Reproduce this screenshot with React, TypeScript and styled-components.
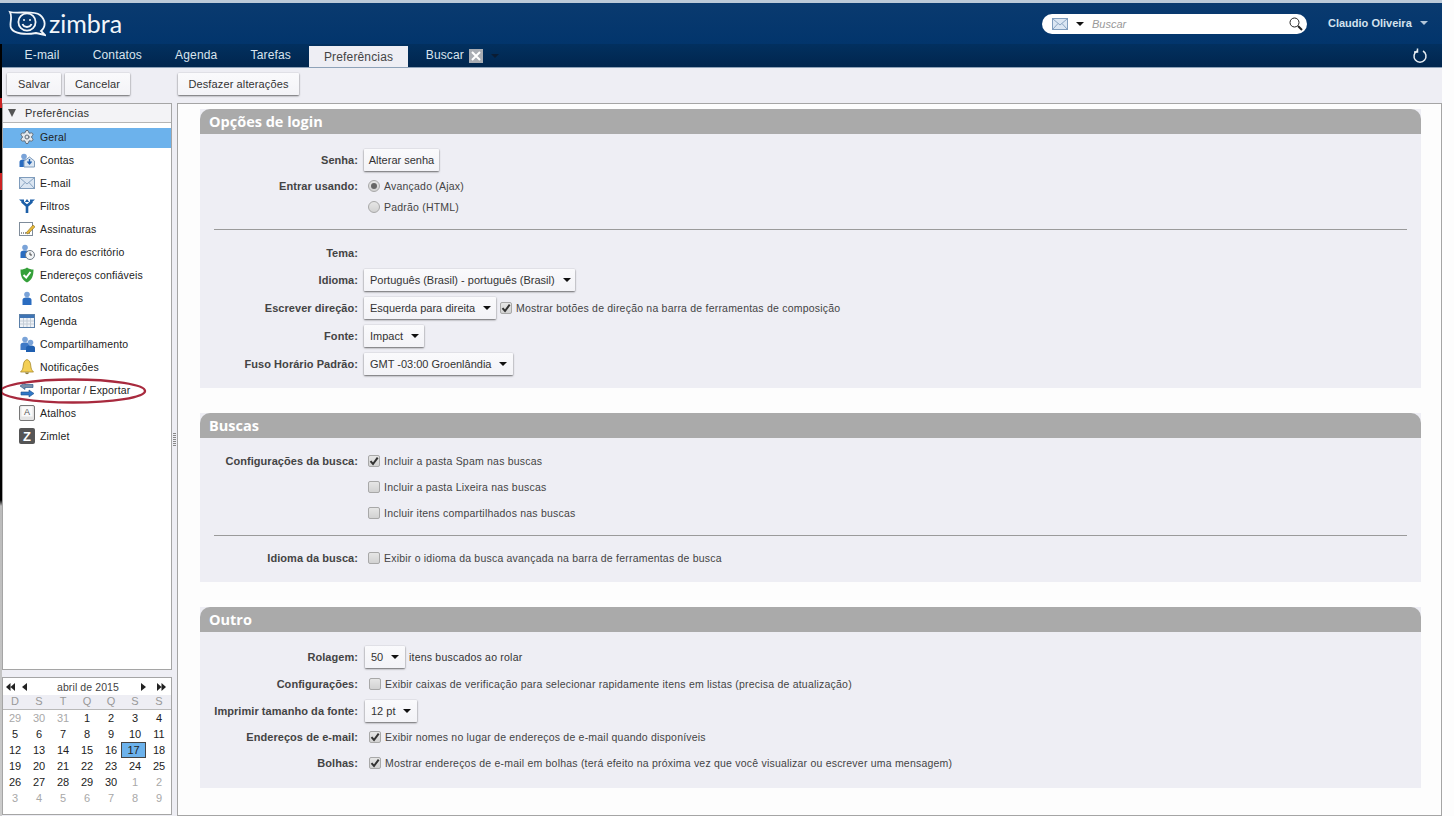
import React from 'react';
import styled, {createGlobalStyle} from 'styled-components';
import {Settings} from 'lucide-react';

const GlobalStyle = createGlobalStyle`
  html, body {
    margin: 0;
    padding: 0;
    background: #fdfdfd;
    overflow: hidden;
  }
  body {
    font-family: "Liberation Sans", Arial, sans-serif;
    font-size: 11px;
    color: #333;
  }
`;

const Page = styled.div`
  position: relative;
  width: 1442px;
  height: 816px;
  display: flex;
  flex-direction: column;
  overflow: hidden;
`;

const EdgeStrip = styled.div`
  position: absolute;
  left: 0;
  top: 44px;
  width: 2px;
  height: 772px;
  background: linear-gradient(
    to bottom,
    #000 0, #000 54px, #c22 54px, #c22 64px, #000 64px, #000 129px,
    #c22 129px, #c22 146px, #000 146px, #000 456px, #bbb 462px, #ccc 772px
  );
`;

const TopBar = styled.header`
  height: 41px;
  border-top: 3px solid #bccad9;
  background: linear-gradient(to bottom, #0a3a6f, #02356c);
  display: flex;
  align-items: center;
  padding-left: 8px;
`;

const Logo = styled.div`
  display: flex;
  align-items: center;
  gap: 3px;
  color: #f2f6fa;
  font-family: Lato, sans-serif;
  font-size: 25px;
  line-height: 28px;
  margin-top: -2px;
`;

const SearchBox = styled.div`
  margin-left: auto;
  margin-top: 1px;
  width: 265px;
  height: 20px;
  box-sizing: border-box;
  border-radius: 10px;
  background: #fff;
  display: flex;
  align-items: center;
  padding: 0 3px 0 10px;
`;

const SearchText = styled.span`
  margin-left: 8px;
  font-style: italic;
  font-size: 11px;
  color: #999;
  flex: 1;
`;

const Caret = styled.i<{$color?: string; $top?: number}>`
  display: inline-block;
  width: 0;
  height: 0;
  margin-left: 8px;
  margin-top: ${p => p.$top || 0}px;
  border-left: 4px solid transparent;
  border-right: 4px solid transparent;
  border-top: 4px solid ${p => p.$color || '#111'};
`;

const UserName = styled.div`
  margin-left: 21px;
  margin-right: 14px;
  margin-top: -2px;
  width: 100px;
  display: flex;
  align-items: center;
  justify-content: space-between;
  font-weight: bold;
  color: #d4e2ee;
  font-size: 11px;
`;

const NavBar = styled.nav`
  height: 23px;
  background: linear-gradient(to bottom, #02305f, #01264e);
  border-bottom: 1px solid #8ea2b8;
  display: flex;
  align-items: flex-end;
  padding-left: 8px;
`;

const Tab = styled.div<{$active?: boolean}>`
  height: 21px;
  line-height: ${p => (p.$active ? '22px' : '19px')};
  padding: 0 ${p => (p.$active ? '15px' : '16.6px')};
  margin: ${p => (p.$active ? '0 1px 0 1.4px' : '0')};
  box-sizing: border-box;
  font-size: 12px;
  letter-spacing: 0.15px;
  color: ${p => (p.$active ? '#444' : '#d9e4ee')};
  background: ${p => (p.$active ? '#eeeef4' : 'transparent')};
  display: flex;
  align-items: ${p => (p.$active ? 'center' : 'flex-start')};
`;

const TabClose = styled.span`
  width: 14px;
  height: 14px;
  margin: 3px 0 0 5px;
  background: #a9adb3;
  display: flex;
  align-items: center;
  justify-content: center;
`;

const Refresh = styled.div`
  margin-left: auto;
  margin-right: 14px;
  height: 22px;
  display: flex;
  align-items: center;
`;

const Toolbar = styled.div`
  height: 35px;
  box-sizing: border-box;
  background: #eeeef4;
  display: flex;
  padding: 5px 0 0 7px;
  gap: 4px;
`;

const Button = styled.button<{$push?: number; $w?: number; $split?: boolean}>`
  height: 22px;
  width: ${p => (p.$w ? `${p.$w}px` : 'auto')};
  margin-left: ${p => p.$push || 0}px;
  padding: 0 6px;
  box-sizing: border-box;
  border: none;
  border-radius: 1px;
  background: linear-gradient(to bottom, #fafafc, #f3f3f7);
  box-shadow: 0 1px 2px rgba(0, 0, 0, 0.55), 0 0 1px rgba(0, 0, 0, 0.3);
  font-family: inherit;
  font-size: 11px;
  white-space: nowrap;
  color: #333;
  display: flex;
  align-items: center;
  justify-content: ${p => (p.$split ? 'space-between' : 'center')};
  flex: none;
`;

const ToolbarButton = styled(Button)`
  letter-spacing: 0.12px;
`;

const Content = styled.div`
  flex: 1;
  display: flex;
  background: #eeeef4;
  min-height: 0;
  padding-left: 2px;
`;

const SideColumn = styled.aside`
  width: 170px;
  display: flex;
  flex-direction: column;
  gap: 7px;
  flex: none;
`;

const TreePanel = styled.div`
  position: relative;
  height: 567px;
  box-sizing: border-box;
  background: #fff;
  border: 1px solid #a5a5a5;
`;

const TreeHeader = styled.div`
  height: 18px;
  display: flex;
  align-items: center;
  background: #f3f3f6;
  border-bottom: 1px solid #b5b5b5;
  font-size: 11px;
  letter-spacing: 0.2px;
  color: #333;
  padding-left: 5px;
  gap: 9px;
`;

const DownTriangle = styled.i`
  width: 0;
  height: 0;
  border-left: 4.5px solid transparent;
  border-right: 4.5px solid transparent;
  border-top: 8px solid #555;
`;

const TreeList = styled.ul`
  list-style: none;
  margin: 0;
  padding: 5px 0 0;
`;

const TreeRow = styled.li<{$selected?: boolean}>`
  height: 20px;
  box-sizing: border-box;
  margin-bottom: 3px;
  padding: 0 0 2px 13px;
  display: flex;
  align-items: center;
  gap: 5px;
  font-size: 10.5px;
  letter-spacing: 0.15px;
  color: #222;
  background: ${p => (p.$selected ? '#6cb2ec' : 'transparent')};
`;

const Circled = styled.svg`
  position: absolute;
  left: -2px;
  top: 273px;
  overflow: visible;
  pointer-events: none;
`;

const CalendarPanel = styled.div`
  height: 138px;
  box-sizing: border-box;
  background: #fff;
  border: 1px solid #a5a5a5;
  padding-top: 1px;
`;

const CalendarHead = styled.div`
  height: 15px;
  display: flex;
  align-items: center;
  justify-content: space-between;
  padding: 0 5px 0 3px;
  font-size: 10.5px;
  letter-spacing: 0.1px;
  color: #444;
`;

const MonthLabel = styled.span`
  margin-left: 8px;
`;

const Arrows = styled.span<{$gap: number}>`
  display: flex;
  gap: ${p => p.$gap}px;
  font-size: 0;
`;

const WeekRow = styled.div`
  display: grid;
  grid-template-columns: repeat(7, 1fr);
  height: 13px;
  line-height: 13px;
  margin: 1px 0 0;
  padding-bottom: 1px;
  text-align: center;
  background: #eeeef4;
  border-bottom: 1px solid #b9b9b9;
  color: #999;
  font-size: 11px;
`;

const DayGrid = styled.div`
  display: grid;
  grid-template-columns: repeat(7, 1fr);
  grid-auto-rows: 16px;
  text-align: center;
  font-size: 11px;
`;

const Day = styled.span<{$muted?: boolean; $selected?: boolean}>`
  line-height: ${p => (p.$selected ? '14px' : '16px')};
  color: ${p => (p.$muted ? '#a8a8a8' : '#222')};
  background: ${p => (p.$selected ? '#6cb2ec' : 'transparent')};
  border: ${p => (p.$selected ? '1px solid #444' : 'none')};
  margin: ${p => (p.$selected ? '0 1px 0 -2px' : '0')};
`;

const Splitter = styled.div`
  width: 5px;
  flex: none;
  display: flex;
  align-items: center;
  justify-content: center;
  padding-bottom: 40px;
  box-sizing: border-box;
  &::before {
    content: '';
    width: 3px;
    height: 13px;
    background: repeating-linear-gradient(to bottom, #888 0, #888 1px, transparent 1px, transparent 2px);
  }
`;

const Main = styled.main`
  flex: 1;
  min-width: 0;
  background: #fdfdfd;
  border: 1px solid #a5a5a5;
  box-sizing: border-box;
  padding: 5px 20px 0 22px;
  display: flex;
  flex-direction: column;
  gap: 25px;
`;

const Section = styled.section`
  background: #eeeef4;
`;

const SectionTitle = styled.h2`
  margin: 0;
  height: 25px;
  line-height: 25px;
  padding-left: 9px;
  border-radius: 10px 10px 0 0;
  background: #aaaaaa;
  color: #fff;
  font-family: "Open Sans", sans-serif;
  font-size: 14.5px;
  font-weight: 700;
`;

const SectionBody = styled.div<{$top: number; $bottom: number}>`
  padding: ${p => p.$top}px 0 ${p => p.$bottom}px;
`;

const Row = styled.div<{$h: number}>`
  height: ${p => p.$h}px;
  display: flex;
  align-items: center;
`;

const Label = styled.div`
  width: 158px;
  flex: none;
  text-align: right;
  font-weight: bold;
  font-size: 11px;
  letter-spacing: 0.05px;
  color: #444;
  margin-right: 5px;
  white-space: nowrap;
`;

const Option = styled.div<{$indent?: number}>`
  display: flex;
  align-items: center;
  gap: 4px;
  margin-left: ${p => p.$indent ?? 5}px;
  font-size: 10.5px;
  letter-spacing: 0.21px;
  color: #444;
`;

const Box = styled.span`
  width: 12px;
  height: 12px;
  box-sizing: border-box;
  border: 1px solid #a8a8a8;
  border-radius: 2px;
  background: linear-gradient(to bottom, #e6e6e6, #d2d2d2);
  display: flex;
  align-items: center;
  justify-content: center;
`;

const Radio = styled.span<{$on?: boolean}>`
  width: 12px;
  height: 12px;
  box-sizing: border-box;
  border: 1px solid #a8a8a8;
  border-radius: 50%;
  background: linear-gradient(to bottom, #e6e6e6, #d2d2d2);
  display: flex;
  align-items: center;
  justify-content: center;
  &::after {
    content: '';
    display: ${p => (p.$on ? 'block' : 'none')};
    width: 6px;
    height: 6px;
    border-radius: 50%;
    background: #666;
  }
`;

const Divider = styled.hr<{$top: number; $bottom: number}>`
  height: 1px;
  border: none;
  background: #9a9a9a;
  margin: ${p => p.$top}px 14px ${p => p.$bottom}px;
`;

const PlainText = styled.span`
  margin-left: 4px;
  font-size: 10.5px;
  letter-spacing: 0.21px;
  color: #333;
`;

const CheckBox = ({on}: {on?: boolean}) => (
  <Box>
    {on && (
      <svg width="10" height="10" viewBox="0 0 10 10">
        <path d="M1.5 5.2 L4 8 L8.7 1.6" fill="none" stroke="#333" strokeWidth="2" />
      </svg>
    )}
  </Box>
);

const Check = ({on, indent, children}: {on?: boolean; indent?: number; children: React.ReactNode}) => (
  <Option $indent={indent}>
    <CheckBox on={on} />
    {children}
  </Option>
);

const Select = ({w, push, children}: {w: number; push?: number; children: React.ReactNode}) => (
  <Button $w={w} $push={push} $split>
    {children}
    <Caret />
  </Button>
);

const LogoMark = () => (
  <svg width="38" height="28" viewBox="8 10 38 28" fill="none" stroke="#f2f6fa" strokeWidth="1.8">
    <path d="M10 13 C18 15 33 11 40 16 C46 21 46 28 41 32 L45 36 L36 34 C26 36 14 35 11 29 C9 24 13 19 10 13 Z" />
    <circle cx="27" cy="23" r="8.6" />
    <circle cx="24" cy="21" r="1" fill="#f2f6fa" stroke="none" />
    <circle cx="30" cy="21" r="1" fill="#f2f6fa" stroke="none" />
    <path d="M22.5 25 C24 29 30 29 31.5 25" />
  </svg>
);

const MailGlyph = ({w = 16}: {w?: number}) => (
  <svg width={w} height="12" viewBox="0 0 16 12">
    <rect x="0.5" y="0.5" width="15" height="11" fill="#dbe6f2" stroke="#7f9cbc" />
    <path d="M1 1 L8 7 L15 1 M1 11 L6 5.5 M15 11 L10 5.5" fill="none" stroke="#8aa5c2" />
  </svg>
);

const Person = ({x = 0, y = 0, c = '#2a6cc0'}: {x?: number; y?: number; c?: string}) => (
  <g transform={`translate(${x} ${y})`}>
    <circle cx="5" cy="3.5" r="2.8" fill="#7aa3d8" />
    <path d="M0.5 14 V9 C0.5 7 3 6.5 5 6.5 C7 6.5 9.5 7 9.5 9 V14 Z" fill={c} />
  </g>
);

const icons: Record<string, React.ReactNode> = {
  gear: <Settings size={18} color="#5f6b78" fill="#e4e8ec" strokeWidth={1.5} />,
  account: (
    <svg width="16" height="16" viewBox="0 0 16 16">
      <Person x={0} y={1} />
      <path d="M5 9 L10.5 5 L15.5 9 V15 H5 Z" fill="#dbe6f2" stroke="#7f9cbc" />
      <path d="M10.5 7 V11 M8.5 9.5 L10.5 12 L12.5 9.5" fill="none" stroke="#1f5fb0" strokeWidth="1.4" />
    </svg>
  ),
  mail: <MailGlyph />,
  filter: (
    <svg width="16" height="16" viewBox="0 0 16 16" fill="none" stroke="#1c5fa8" strokeWidth="2.6">
      <path d="M8 15 V8 L3 3.5 M8 8 L13 3.5" />
      <path d="M0 1.5 H5 V6 Z M16 1.5 H11 V6 Z M8 1 L5.8 4 H10.2 Z" fill="#1c5fa8" stroke="none" />
    </svg>
  ),
  signature: (
    <svg width="16" height="16" viewBox="0 0 16 16">
      <rect x="0.5" y="1.5" width="13" height="13" fill="#fff" stroke="#7f8c9a" />
      <path d="M2 12 H11" stroke="#333" strokeDasharray="1 1" />
      <path d="M7 12 L14 4 L16 5.8 L9 13 Z" fill="#e8b93a" stroke="#8a6b1a" strokeWidth="0.6" />
    </svg>
  ),
  away: (
    <svg width="16" height="16" viewBox="0 0 16 16">
      <Person x={1} y={0} />
      <circle cx="11" cy="11" r="4.5" fill="#f2f4f6" stroke="#6f7a86" />
      <path d="M11 8.5 V11 H13" fill="none" stroke="#444" />
    </svg>
  ),
  shield: (
    <svg width="16" height="16" viewBox="0 0 16 16">
      <path d="M8 0.5 C10 2 12 2.5 14.5 2.5 C14.5 9 13 13 8 15.5 C3 13 1.5 9 1.5 2.5 C4 2.5 6 2 8 0.5 Z" fill="#35a03a" />
      <path d="M4.5 8 L7.2 10.5 L11.5 5" fill="none" stroke="#fff" strokeWidth="2" />
    </svg>
  ),
  contact: (
    <svg width="16" height="16" viewBox="0 0 16 16">
      <Person x={3} y={1} />
    </svg>
  ),
  calendar: (
    <svg width="16" height="14" viewBox="0 0 16 14">
      <rect x="0.5" y="0.5" width="15" height="13" fill="#eef2f7" stroke="#5a7fa8" />
      <rect x="1" y="1" width="14" height="3" fill="#3f74b4" />
      <path d="M1 7 H15 M1 10 H15 M4.5 4 V13 M8 4 V13 M11.5 4 V13" stroke="#c3ccd6" />
    </svg>
  ),
  share: (
    <svg width="16" height="16" viewBox="0 0 16 16">
      <Person x={1} y={0} c="#3f79c6" />
      <Person x={6.5} y={3} c="#1f5fb0" />
    </svg>
  ),
  bell: (
    <svg width="16" height="16" viewBox="0 0 16 16">
      <path d="M8 0.5 C5 1.5 4.5 4 4.2 7 C4 10 3 11.5 1.5 13 H14.5 C13 11.5 12 10 11.8 7 C11.5 4 11 1.5 8 0.5 Z" fill="#f3cf55" stroke="#a88a2c" strokeWidth="0.8" />
      <path d="M6 13.5 C6.5 15.8 9.5 15.8 10 13.5 Z" fill="#8a7a3a" />
    </svg>
  ),
  transfer: (
    <svg width="16" height="16" viewBox="0 0 16 16" fill="#2f78c8" stroke="#1d4f8a" strokeWidth="0.6">
      <path d="M1 4 L6 0.5 V2.5 H14 V5.5 H6 V7.5 Z" fill="#7a8ea6" />
      <path d="M15 11.5 L10 8 V10 H2 V13 H10 V15 Z" />
    </svg>
  ),
  key: (
    <svg width="16" height="16" viewBox="0 0 16 16">
      <rect x="0.5" y="0.5" width="15" height="15" rx="1.5" fill="#e4e4e4" stroke="#777" />
      <rect x="2.5" y="1.5" width="11" height="10" fill="#fafafa" />
      <text x="8" y="9.5" textAnchor="middle" fontFamily="Liberation Sans" fontSize="9" fill="#555">A</text>
    </svg>
  ),
  zimlet: (
    <svg width="16" height="16" viewBox="0 0 16 16">
      <rect width="16" height="16" rx="2" fill="#555" />
      <text x="8" y="13" textAnchor="middle" fontFamily="Liberation Sans" fontWeight="bold" fontSize="13" fill="#fff">Z</text>
    </svg>
  ),
};

const IconSlot = styled.span`
  width: 16px;
  height: 16px;
  margin-left: 3px;
  flex: none;
  display: flex;
  align-items: center;
  justify-content: center;
`;

const prefs: [string, string][] = [
  ['gear', 'Geral'],
  ['account', 'Contas'],
  ['mail', 'E-mail'],
  ['filter', 'Filtros'],
  ['signature', 'Assinaturas'],
  ['away', 'Fora do escritório'],
  ['shield', 'Endereços confiáveis'],
  ['contact', 'Contatos'],
  ['calendar', 'Agenda'],
  ['share', 'Compartilhamento'],
  ['bell', 'Notificações'],
  ['transfer', 'Importar / Exportar'],
  ['key', 'Atalhos'],
  ['zimlet', 'Zimlet'],
];

const days = [
  29, 30, 31, 1, 2, 3, 4,
  5, 6, 7, 8, 9, 10, 11,
  12, 13, 14, 15, 16, 17, 18,
  19, 20, 21, 22, 23, 24, 25,
  26, 27, 28, 29, 30, 1, 2,
  3, 4, 5, 6, 7, 8, 9,
];

const DoubleLeft = () => (
  <svg width="9" height="8" viewBox="0 0 9 8"><path d="M4.5 0 L0 4 L4.5 8 Z M9 0 L4.5 4 L9 8 Z" fill="#222" /></svg>
);
const SingleLeft = () => (
  <svg width="5" height="8" viewBox="0 0 5 8"><path d="M5 0 L0 4 L5 8 Z" fill="#222" /></svg>
);
const SingleRight = () => (
  <svg width="5" height="8" viewBox="0 0 5 8"><path d="M0 0 L5 4 L0 8 Z" fill="#222" /></svg>
);
const DoubleRight = () => (
  <svg width="9" height="8" viewBox="0 0 9 8"><path d="M0 0 L4.5 4 L0 8 Z M4.5 0 L9 4 L4.5 8 Z" fill="#222" /></svg>
);

const Sidebar = () => (
  <SideColumn>
    <TreePanel>
      <TreeHeader>
        <DownTriangle />
        Preferências
      </TreeHeader>
      <TreeList>
        {prefs.map(([icon, name], i) => (
          <TreeRow key={name} $selected={i === 0}>
            <IconSlot>{icons[icon]}</IconSlot>
            {name}
          </TreeRow>
        ))}
      </TreeList>
      <Circled width="150" height="28" viewBox="0 0 150 28">
        <ellipse cx="72" cy="14" rx="72" ry="11.5" fill="none" stroke="#a82a3e" strokeWidth="2.4" />
      </Circled>
    </TreePanel>
    <CalendarPanel>
      <CalendarHead>
        <Arrows $gap={7}><DoubleLeft /><SingleLeft /></Arrows>
        <MonthLabel>abril de 2015</MonthLabel>
        <Arrows $gap={11}><SingleRight /><DoubleRight /></Arrows>
      </CalendarHead>
      <WeekRow>
        {['D', 'S', 'T', 'Q', 'Q', 'S', 'S'].map((d, i) => <span key={i}>{d}</span>)}
      </WeekRow>
      <DayGrid>
        {days.map((d, i) => (
          <Day key={i} $muted={i < 3 || i > 32} $selected={i === 19}>{d}</Day>
        ))}
      </DayGrid>
    </CalendarPanel>
  </SideColumn>
);

const Preferences = () => (
  <Main>
    <Section>
      <SectionTitle>Opções de login</SectionTitle>
      <SectionBody $top={13} $bottom={10}>
        <Row $h={25}>
          <Label>Senha:</Label>
          <Button $w={75} $push={1}>Alterar senha</Button>
        </Row>
        <Row $h={28}>
          <Label>Entrar usando:</Label>
          <Option><Radio $on />Avançado (Ajax)</Option>
        </Row>
        <Row $h={14}>
          <Label />
          <Option><Radio />Padrão (HTML)</Option>
        </Row>
        <Divider $top={15} $bottom={9} />
        <Row $h={27}>
          <Label>Tema:</Label>
        </Row>
        <Row $h={28}>
          <Label>Idioma:</Label>
          <Select w={211} push={1}>Português (Brasil) - português (Brasil)</Select>
        </Row>
        <Row $h={28}>
          <Label>Escrever direção:</Label>
          <Select w={132} push={1}>Esquerda para direita</Select>
          <Check on indent={4}>Mostrar botões de direção na barra de ferramentas de composição</Check>
        </Row>
        <Row $h={28}>
          <Label>Fonte:</Label>
          <Select w={60} push={1}>Impact</Select>
        </Row>
        <Row $h={28}>
          <Label>Fuso Horário Padrão:</Label>
          <Select w={149} push={1}>GMT -03:00 Groenlândia</Select>
        </Row>
      </SectionBody>
    </Section>

    <Section>
      <SectionTitle>Buscas</SectionTitle>
      <SectionBody $top={10} $bottom={11}>
        <Row $h={26}>
          <Label>Configurações da busca:</Label>
          <Check on>Incluir a pasta Spam nas buscas</Check>
        </Row>
        <Row $h={26}>
          <Label />
          <Check>Incluir a pasta Lixeira nas buscas</Check>
        </Row>
        <Row $h={26}>
          <Label />
          <Check>Incluir itens compartilhados nas buscas</Check>
        </Row>
        <Divider $top={9} $bottom={9} />
        <Row $h={26}>
          <Label>Idioma da busca:</Label>
          <Check>Exibir o idioma da busca avançada na barra de ferramentas de busca</Check>
        </Row>
      </SectionBody>
    </Section>

    <Section>
      <SectionTitle>Outro</SectionTitle>
      <SectionBody $top={11} $bottom={12}>
        <Row $h={27}>
          <Label>Rolagem:</Label>
          <Select w={40} push={2}>50</Select>
          <PlainText>itens buscados ao rolar</PlainText>
        </Row>
        <Row $h={27}>
          <Label>Configurações:</Label>
          <Check indent={6}>Exibir caixas de verificação para selecionar rapidamente itens em listas (precisa de atualização)</Check>
        </Row>
        <Row $h={27}>
          <Label>Imprimir tamanho da fonte:</Label>
          <Select w={52} push={2}>12 pt</Select>
        </Row>
        <Row $h={26}>
          <Label>Endereços de e-mail:</Label>
          <Check on indent={6}>Exibir nomes no lugar de endereços de e-mail quando disponíveis</Check>
        </Row>
        <Row $h={26}>
          <Label>Bolhas:</Label>
          <Check on indent={6}>Mostrar endereços de e-mail em bolhas (terá efeito na próxima vez que você visualizar ou escrever uma mensagem)</Check>
        </Row>
      </SectionBody>
    </Section>
  </Main>
);

export default function App() {
  return (
    <Page>
      <GlobalStyle />
      <TopBar>
        <Logo>
          <LogoMark />
          zimbra
        </Logo>
        <SearchBox>
          <MailGlyph />
          <Caret />
          <SearchText>Buscar</SearchText>
          <svg width="16" height="16" viewBox="0 0 16 16" fill="none" stroke="#222">
            <circle cx="6.5" cy="6.5" r="4.5" strokeWidth="1" />
            <path d="M10 10 L14 14" strokeWidth="2" />
          </svg>
        </SearchBox>
        <UserName>
          Claudio Oliveira
          <Caret $color="#b4c6d8" />
        </UserName>
      </TopBar>
      <NavBar>
        {['E-mail', 'Contatos', 'Agenda', 'Tarefas'].map(t => <Tab key={t}>{t}</Tab>)}
        <Tab $active>Preferências</Tab>
        <Tab>
          Buscar
          <TabClose>
            <svg width="10" height="10" viewBox="0 0 10 10">
              <path d="M1 1 L9 9 M9 1 L1 9" stroke="#fff" strokeWidth="2" />
            </svg>
          </TabClose>
          <Caret $color="#0a1c33" $top={8} />
        </Tab>
        <Refresh>
          <svg width="16" height="16" viewBox="0 0 16 16" fill="none" stroke="#e8eef4" strokeWidth="1.5">
            <path d="M11 3 A6 6 0 1 1 5 3" />
            <path d="M5.5 0.5 V4 H2" />
          </svg>
        </Refresh>
      </NavBar>
      <Toolbar>
        <ToolbarButton $w={54}>Salvar</ToolbarButton>
        <ToolbarButton $w={65}>Cancelar</ToolbarButton>
        <ToolbarButton $w={121} $push={44}>Desfazer alterações</ToolbarButton>
      </Toolbar>
      <Content>
        <Sidebar />
        <Splitter />
        <Preferences />
      </Content>
      <EdgeStrip />
    </Page>
  );
}
